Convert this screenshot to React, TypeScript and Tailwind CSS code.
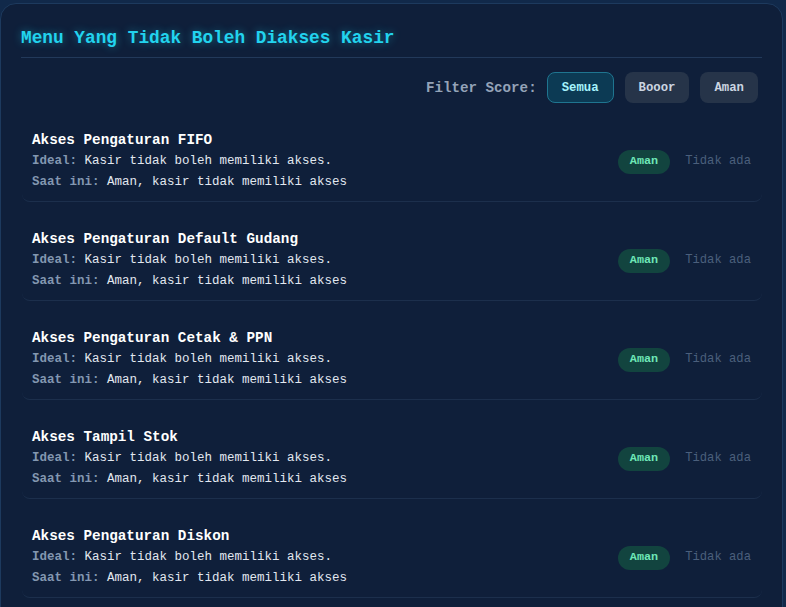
const rows = [
  "Akses Pengaturan FIFO",
  "Akses Pengaturan Default Gudang",
  "Akses Pengaturan Cetak & PPN",
  "Akses Tampil Stok",
  "Akses Pengaturan Diskon",
];

export default function App() {
  return (
    <div
      className="min-h-screen bg-[#11294a] pt-[3px] overflow-hidden"
      style={{ fontFamily: '"Liberation Mono", "DejaVu Sans Mono", monospace' }}
    >
      <div className="w-[783px] rounded-2xl border border-[#1d3a5e] bg-[#0f1f3a] px-5 pt-[21px] pb-6">
        {/* Header */}
        <h1 className="border-b border-[#22395a] pb-[6px] text-[17.8px] font-bold leading-[26px] text-[#22d3ee] [text-shadow:0_0_8px_rgba(34,211,238,0.45)]">
          Menu Yang Tidak Boleh Diakses Kasir
        </h1>

        {/* Filter */}
        <div className="mt-[14px] flex items-center justify-end gap-[10px] pr-1">
          <span className="pt-[3px] text-[14.2px] font-bold text-[#94a3b8]">Filter Score:</span>
          <div className="flex gap-[11px]">
            <button className="h-[31px] rounded-lg border border-[#1f7590] bg-[#0c3a54] px-[14px] pt-px text-[12.3px] font-bold text-[#a5f3fc]">
              Semua
            </button>
            <button className="h-[31px] rounded-lg border border-transparent bg-[#263449] px-[13px] pt-px text-[12.3px] font-bold text-[#cbd5e1]">
              Booor
            </button>
            <button className="h-[31px] rounded-lg border border-transparent bg-[#263449] px-[13px] pt-px text-[12.3px] font-bold text-[#cbd5e1]">
              Aman
            </button>
          </div>
        </div>

        {/* List */}
        <div className="mt-4 flex flex-col gap-4">
          {rows.map((title) => (
            <div
              key={title}
              className="ml-px flex items-center justify-between rounded-lg border-b border-[#1c2f4c] pl-[10px] pr-[11px] pt-[11px] pb-[8px]"
            >
              <div>
                <div className="mb-px text-[14.3px] font-bold leading-5 text-white">{title}</div>
                <div className="text-[12.5px] leading-[21px] text-[#e2e8f0]">
                  <span className="font-bold text-[#8397b1]">Ideal:</span> Kasir tidak boleh memiliki akses.
                </div>
                <div className="text-[12.5px] leading-[21px] text-[#e2e8f0]">
                  <span className="font-bold text-[#8397b1]">Saat ini:</span> Aman, kasir tidak memiliki akses
                </div>
              </div>
              <div className="flex items-center gap-[15px]">
                <span className="flex h-6 items-center rounded-full bg-[#12443f] px-3 text-[11.8px] font-bold text-[#6ee7b7]">
                  Aman
                </span>
                <span className="text-[12.2px] text-[#4b5f7c]">Tidak ada</span>
              </div>
            </div>
          ))}
        </div>
      </div>
    </div>
  );
}
